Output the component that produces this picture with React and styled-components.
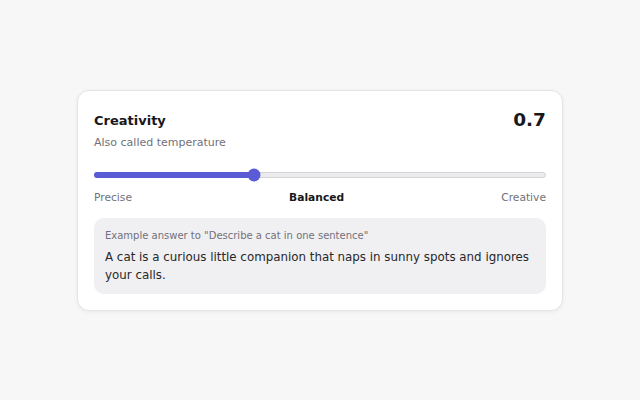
import { useState } from 'react';
import styled, { createGlobalStyle } from 'styled-components';

const GlobalStyle = createGlobalStyle`
  html, body { margin: 0; padding: 0; }
  body {
    background: #f7f7f8;
    font-family: "DejaVu Sans", "Liberation Sans", sans-serif;
  }
`;

const Page = styled.div`
  width: 640px;
  height: 400px;
  display: flex;
  align-items: flex-start;
  justify-content: center;
  padding-top: 90px;
  box-sizing: border-box;
`;

const Card = styled.div`
  width: 452px;
  padding: 17px 16px 16px 16px;
  background: #fff;
  border: 1px solid #e4e4e7;
  border-radius: 12px;
  box-shadow: 0 1px 4px rgba(0, 0, 0, 0.06);
`;

const Header = styled.div`
  display: flex;
  justify-content: space-between;
  align-items: flex-start;
  height: 24px;
`;

const Title = styled.div`
  font-size: 13px;
  line-height: 16px;
  font-weight: 700;
  color: #18181b;
  margin-top: 5px;
`;

const Value = styled.div`
  font-size: 18.5px;
  font-weight: 700;
  color: #18181b;
  line-height: 24px;
`;

const Subtitle = styled.div`
  font-size: 11px;
  line-height: 13px;
  color: #71717a;
  margin-top: 4px;
`;

const Track = styled.div`
  position: relative;
  height: 6px;
  margin-top: 23px;
  background: #ececee;
  border: 1px solid #d4d4d8;
  border-radius: 4px;
  box-sizing: border-box;
`;

const Fill = styled.div`
  position: absolute;
  left: -1px;
  top: -1px;
  height: 6px;
  background: #5b5bd6;
  border-radius: 4px;
`;

const Thumb = styled.div`
  position: absolute;
  top: 50%;
  width: 13px;
  height: 13px;
  border-radius: 50%;
  background: #5b5bd6;
  transform: translate(-50%, -50%);
`;

const Labels = styled.div`
  display: flex;
  justify-content: space-between;
  margin-top: 13px;
  font-size: 10.7px;
  line-height: 13px;
`;

const Label = styled.span`
  color: ${({ $active }) => ($active ? '#18181b' : '#71717a')};
  font-weight: ${({ $active }) => ($active ? 700 : 400)};
`;

const Example = styled.div`
  margin-top: 14px;
  background: #f0f0f2;
  border-radius: 10px;
  padding: 12px 8px 10px 11px;
`;

const Caption = styled.div`
  font-size: 10px;
  line-height: 12px;
  color: #71717a;
`;

const Answer = styled.div`
  font-size: 11.85px;
  line-height: 18px;
  color: #27272a;
  margin-top: 6px;
`;

const App = () => {
  const [value] = useState(0.7);
  const pct = 35.4;

  return (
    <>
      <GlobalStyle />
      <Page>
        <Card>
          <Header>
            <Title>Creativity</Title>
            <Value>{value}</Value>
          </Header>
          <Subtitle>Also called temperature</Subtitle>
          <Track>
            <Fill style={{ width: `${pct}%` }} />
            <Thumb style={{ left: `${pct}%` }} />
          </Track>
          <Labels>
            <Label>Precise</Label>
            <Label $active>Balanced</Label>
            <Label>Creative</Label>
          </Labels>
          <Example>
            <Caption>Example answer to "Describe a cat in one sentence"</Caption>
            <Answer>
              A cat is a curious little companion that naps in sunny spots and ignores your calls.
            </Answer>
          </Example>
        </Card>
      </Page>
    </>
  );
};

export default App;
